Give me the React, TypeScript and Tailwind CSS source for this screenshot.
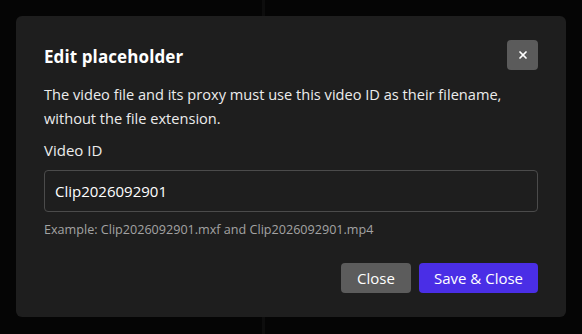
import { X } from 'lucide-react';

export default function App() {
  return (
    <div
      className="relative w-[582px] h-[334px] bg-[#050505] overflow-hidden"
      style={{ fontFamily: '"Open Sans", "Noto Sans", sans-serif' }}
    >
      {/* faint divider of the page behind the overlay */}
      <div className="absolute left-[262px] top-0 w-[3px] h-full bg-[#0d0d0d]" />

      <div className="relative mx-4 mt-4 h-[301px] rounded-md bg-[#1e1e1e] px-7 pt-6 text-white">
        <div className="flex items-start justify-between">
          <h2 className="pt-[5px] text-[17px] font-bold leading-6 tracking-[0.1px]">Edit placeholder</h2>
          <button className="flex h-[30px] w-[31px] items-center justify-center rounded bg-[#5b5b5b] text-white">
            <X size={12} strokeWidth={3.5} />
          </button>
        </div>

        <p className="mt-[12px] text-[14.6px] leading-6 text-[#ececec]">
          The video file and its proxy must use this video ID as their filename, without the file extension.
        </p>

        <label className="mt-[8px] block text-[15px] leading-6 text-[#ececec]">Video ID</label>

        <input
          readOnly
          value="Clip2026092901"
          className="mt-[8px] block h-[42px] w-full rounded border border-[#4b4b4b] bg-[#1e1e1e] px-[10px] text-[15px] text-white outline-none"
        />

        <p className="mt-[10px] text-[12.6px] leading-4 text-[#a3a3a3]">
          Example: Clip2026092901.mxf and Clip2026092901.mp4
        </p>

        <div className="mt-[25px] flex justify-end gap-2">
          <button className="h-[30px] w-[70px] rounded bg-[#5c5c5c] text-[15px] text-white">Close</button>
          <button className="h-[30px] w-[119px] rounded bg-[#4a2ee6] text-[15px] text-white">Save &amp; Close</button>
        </div>
      </div>
    </div>
  );
}
